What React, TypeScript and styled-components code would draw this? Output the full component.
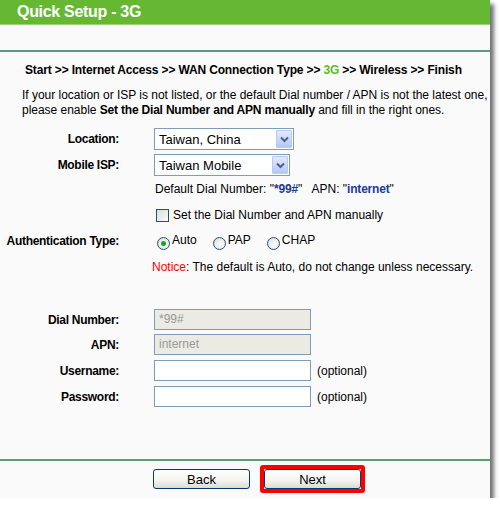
import React from "react";
import styled, {createGlobalStyle} from "styled-components";

const GlobalStyle = createGlobalStyle`
  body {
    margin: 0;
    background: #ffffff;
    font-family: "Liberation Sans", Arial, sans-serif;
    font-size: 12px;
    color: #000;
  }
  b {
    letter-spacing: -0.2px;
  }
`

const Panel = styled.div`
  width: 490px;
  height: 498px;
  background: #fafafa;
  box-shadow: 4px 4px 4px rgba(0, 0, 0, 0.55);
  display: flex;
  flex-direction: column;
`

const Header = styled.div`
  height: 24px;
  background: #66b832;
  border-bottom: 1px solid #9fd27c;
  color: #fff;
  font-weight: bold;
  font-size: 16px;
  line-height: 24px;
  padding-left: 17px;
  letter-spacing: -0.3px;
`

const Spacer = styled.div<{ $h: number }>`
  height: ${p => p.$h}px;
  flex-shrink: 0;
`

const Rule = styled.div`
  height: 2px;
  background: #5f9a7c;
`

const Crumbs = styled.div`
  font-weight: bold;
  line-height: 16px;
  padding-left: 25px;
  margin-top: 10px;
  letter-spacing: -0.15px;
`

const Green = styled.span`
  color: #5cbf1a;
`

const Intro = styled.div`
  padding-left: 22px;
  line-height: 15px;
  margin-top: 10px;
  letter-spacing: -0.02px;
`

const Row = styled.div<{ $h: number, $mt: number }>`
  display: grid;
  grid-template-columns: 119px 1fr;
  column-gap: 35px;
  align-items: center;
  height: ${p => p.$h}px;
  margin-top: ${p => p.$mt}px;
`

const Label = styled.div`
  font-weight: bold;
  text-align: right;
  white-space: nowrap;
  letter-spacing: -0.3px;
`

const Value = styled.div`
  display: flex;
  align-items: center;
  white-space: nowrap;
`

const SelectBox = styled.div<{ $w: number }>`
  width: ${p => p.$w}px;
  height: 22px;
  box-sizing: border-box;
  border: 1px solid #7f9db9;
  background: #fff;
  display: flex;
  align-items: center;
  justify-content: space-between;
  padding: 1px 1px 1px 4px;
  font-size: 13px;
`

const Arrow = styled.div`
  width: 16px;
  height: 18px;
  box-sizing: border-box;
  border: 1px solid #b9c9ef;
  border-radius: 1px;
  background: linear-gradient(#e1eafe, #b4c8f6);
  display: flex;
  align-items: center;
  justify-content: center;
`

const DialInfo = styled.span`
  padding-left: 1px;
`

const Blue = styled.b`
  color: #1a3a99;
`

const Box = styled.span`
  width: 11px;
  height: 11px;
  border: 1px solid #1c5180;
  background: linear-gradient(135deg, #dcdcd7, #fafaf8);
  margin: 0 4px 0 2px;
`

const RadioGroup = styled.div`
  display: flex;
  align-items: center;
  gap: 16px;
  padding-left: 3px;
`

const RadioItem = styled.label`
  display: flex;
  align-items: center;
  gap: 2px;
`

const Circle = styled.span<{ $on?: boolean }>`
  width: 11px;
  height: 11px;
  border-radius: 50%;
  border: 1px solid #1c5180;
  background: radial-gradient(circle at 60% 60%, #ffffff, #d8d8d0);
  margin-top: 4px;
  display: flex;
  align-items: center;
  justify-content: center;
  &::after {
    content: "";
    width: 5px;
    height: 5px;
    border-radius: 50%;
    background: ${p => p.$on ? "#21a121" : "transparent"};
  }
`

const RadioText = styled.span`
  margin-top: -3px;
`

const Notice = styled.span`
  color: #ff0000;
`

const NoticeLine = styled.span`
  margin-left: -2px;
`

const TextBox = styled.div<{ $disabled?: boolean }>`
  width: 157px;
  height: 21px;
  box-sizing: border-box;
  border: 1px solid #7f9db9;
  background: ${p => p.$disabled ? "#ebebe4" : "#fff"};
  color: #999;
  font-size: 12px;
  line-height: 19px;
  padding-left: 4px;
`

const Optional = styled.span`
  margin-left: 6px;
`

const Buttons = styled.div`
  display: flex;
  align-items: center;
  padding-left: 153px;
  margin-top: 4px;
  gap: 10px;
`

const Btn = styled.button`
  width: 97px;
  height: 20px;
  border: 1px solid #003c74;
  border-radius: 3px;
  background: linear-gradient(#ffffff, #f3f3ef 60%, #dcdcd2);
  font-family: "Liberation Sans", Arial, sans-serif;
  font-size: 13px;
  color: #000;
  padding: 0;
`

const Highlight = styled.div`
  border: 4px solid #ff0000;
  border-radius: 3px;
  padding: 0;
  display: flex;
`

function Select({width, text}: { width: number, text: string }) {
    return (
        <SelectBox $w={width}>
            <span>{text}</span>
            <Arrow>
                <svg width="9" height="7" viewBox="0 0 9 7">
                    <path d="M1 1.5 L4.5 5 L8 1.5" fill="none" stroke="#4d6185" strokeWidth="2"/>
                </svg>
            </Arrow>
        </SelectBox>
    )
}

export default function App() {
    return (
        <>
            <GlobalStyle/>
            <Panel>
                <Header>Quick Setup - 3G</Header>
                <Spacer $h={25}/>
                <Rule/>
                <Crumbs>
                    Start &gt;&gt; Internet Access &gt;&gt; WAN Connection Type &gt;&gt; <Green>3G</Green> &gt;&gt; Wireless &gt;&gt; Finish
                </Crumbs>
                <Intro>
                    If your location or ISP is not listed, or the default Dial number / APN is not the latest one,<br/>
                    please enable <b>Set the Dial Number and APN manually</b> and fill in the right ones.
                </Intro>
                <Row $h={22} $mt={10}>
                    <Label>Location:</Label>
                    <Value><Select width={140} text="Taiwan, China"/></Value>
                </Row>
                <Row $h={22} $mt={4}>
                    <Label>Mobile ISP:</Label>
                    <Value><Select width={136} text="Taiwan Mobile"/></Value>
                </Row>
                <Row $h={18} $mt={4}>
                    <span/>
                    <Value>
                        <DialInfo>Default Dial Number: "<Blue>*99#</Blue>" &nbsp; APN: "<Blue>internet</Blue>"</DialInfo>
                    </Value>
                </Row>
                <Row $h={18} $mt={8}>
                    <span/>
                    <Value><Box/>Set the Dial Number and APN manually</Value>
                </Row>
                <Row $h={18} $mt={8}>
                    <Label>Authentication Type:</Label>
                    <RadioGroup>
                        <RadioItem><Circle $on/><RadioText>Auto</RadioText></RadioItem>
                        <RadioItem><Circle/><RadioText>PAP</RadioText></RadioItem>
                        <RadioItem><Circle/><RadioText>CHAP</RadioText></RadioItem>
                    </RadioGroup>
                </Row>
                <Row $h={18} $mt={8}>
                    <span/>
                    <Value>
                        <NoticeLine><Notice>Notice</Notice>: The default is Auto, do not change unless necessary.</NoticeLine>
                    </Value>
                </Row>
                <Row $h={21} $mt={33}>
                    <Label>Dial Number:</Label>
                    <Value><TextBox $disabled>*99#</TextBox></Value>
                </Row>
                <Row $h={21} $mt={4}>
                    <Label>APN:</Label>
                    <Value><TextBox $disabled>internet</TextBox></Value>
                </Row>
                <Row $h={21} $mt={5}>
                    <Label>Username:</Label>
                    <Value><TextBox/><Optional>(optional)</Optional></Value>
                </Row>
                <Row $h={21} $mt={5}>
                    <Label>Password:</Label>
                    <Value><TextBox/><Optional>(optional)</Optional></Value>
                </Row>
                <Spacer $h={52}/>
                <Rule/>
                <Buttons>
                    <Btn>Back</Btn>
                    <Highlight><Btn>Next</Btn></Highlight>
                </Buttons>
            </Panel>
        </>
    )
}
